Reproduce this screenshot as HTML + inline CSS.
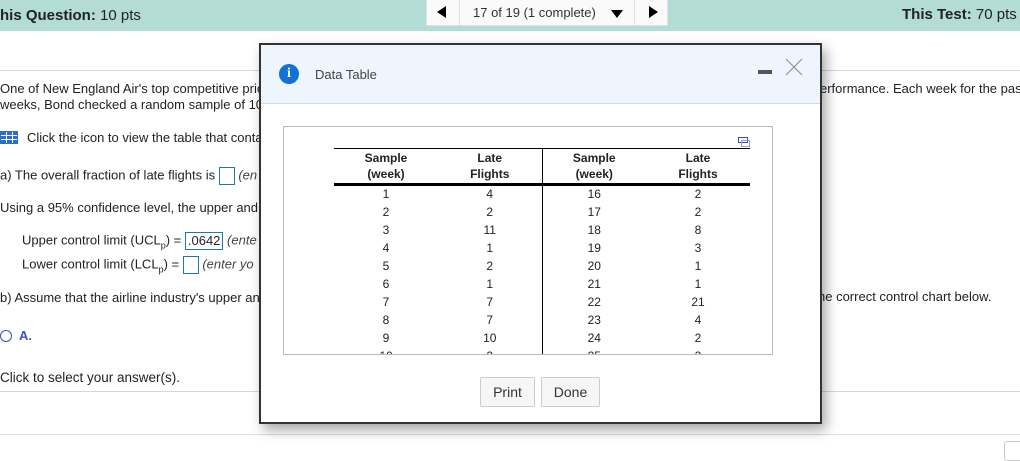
<!DOCTYPE html>
<html><head><meta charset="utf-8">
<style>
*{margin:0;padding:0;box-sizing:border-box}
body{width:1020px;height:457px;overflow:hidden;background:#fff;font-family:"Liberation Sans",Arial,sans-serif;color:#222;position:relative;font-size:13px}
.abs{position:absolute;white-space:nowrap}
.top{position:absolute;left:0;top:0;width:1020px;height:31px;background:#b3dcd6}
.nav{position:absolute;left:426px;top:0;width:242px;height:26px;background:#fafafa;border:1px solid #e0e0e0;border-top:none}
.hl{position:absolute;left:0;width:1020px;height:1px;background:#d3d8e0}
.box{display:inline-block;border:1px solid #1a7aa8;height:18px;vertical-align:middle}
sub{font-size:9px;vertical-align:-4px}
.dlg{position:absolute;left:259px;top:43px;width:563px;height:381px;border:2px solid #333;background:#fff;box-shadow:4px 6px 12px rgba(0,0,0,.35)}
.dh{position:absolute;left:0;top:0;width:559px;height:59px;background:#eff5fc;border-bottom:1px solid #c9dcec}
.inner{position:absolute;left:22px;top:81px;width:490px;height:229px;border:1px solid #bbb;overflow:hidden;background:#fff}
table{position:absolute;left:50px;top:21px;border-collapse:collapse;font-size:12px}
td,th{width:104px;text-align:center;height:18px;padding:0}
th{font-weight:bold;line-height:16px;height:36px;border-top:1px solid #000;border-bottom:3px solid #000;vertical-align:middle}
.d{border-right:1px solid #000}
.btn{position:absolute;top:332px;height:30px;border:1px solid #ccc;border-radius:2px;background:#f6f6f6;font-size:14px;color:#333;text-align:center;line-height:28px}
</style></head><body>
<div class="top"></div>
<div class="abs" style="left:0;top:7px;font-size:15px"><b>his Question:</b> 10 pts</div>
<div class="nav">
 <div style="position:absolute;left:32px;top:0;width:1px;height:26px;background:#e0e0e0"></div>
 <div style="position:absolute;left:207px;top:0;width:1px;height:26px;background:#e0e0e0"></div>
 <div class="abs" style="left:10px;top:6px;width:0;height:0;border-top:6px solid transparent;border-bottom:6px solid transparent;border-right:9px solid #000"></div>
 <div class="abs" style="left:46px;top:5px;font-size:13px;color:#333">17 of 19 (1 complete)</div>
 <div class="abs" style="left:184px;top:10px;width:0;height:0;border-left:6px solid transparent;border-right:6px solid transparent;border-top:8px solid #000"></div>
 <div class="abs" style="left:222px;top:6px;width:0;height:0;border-top:6px solid transparent;border-bottom:6px solid transparent;border-left:9px solid #000"></div>
</div>
<div class="abs" style="left:902px;top:6px;font-size:15px"><b>This Test:</b> 70 pts</div>
<div class="hl" style="top:70px"></div>
<div class="abs" style="left:0;top:81px">One of New England Air's top competitive pric</div>
<div class="abs" style="left:0;top:97px">weeks, Bond checked a random sample of 10</div>
<div class="abs" style="left:820px;top:81px">erformance. Each week for the pas</div>
<div class="abs" style="left:0;top:131px;width:18px;height:13px;background:#2a6fc9;border:1px solid #2a6fc9;background-image:linear-gradient(90deg,transparent 5px,#fff 5px,#fff 6px,transparent 6px,transparent 11px,#fff 11px,#fff 12px,transparent 12px),linear-gradient(transparent 3px,#fff 3px,#fff 4px,transparent 4px,transparent 7px,#fff 7px,#fff 8px,transparent 8px)"></div>
<div class="abs" style="left:27px;top:130px">Click the icon to view the table that conta</div>
<div class="abs" style="left:0;top:167px">a) The overall fraction of late flights is <span class="box" style="width:16px"></span> <i style="color:#444">(en</i></div>
<div class="abs" style="left:0;top:200px">Using a 95% confidence level, the upper and</div>
<div class="abs" style="left:22px;top:232px">Upper control limit (UCL<sub>p</sub>) = <span class="box" style="padding:0 2px;line-height:16px">.0642</span> <i style="color:#444">(ente</i></div>
<div class="abs" style="left:22px;top:256px">Lower control limit (LCL<sub>p</sub>) = <span class="box" style="width:16px"></span> <i style="color:#444">(enter yo</i></div>
<div class="abs" style="left:0;top:290px">b) Assume that the airline industry's upper an</div>
<div class="abs" style="left:818px;top:289px">he correct control chart below.</div>
<div class="abs" style="left:0;top:330px;width:12px;height:12px;border:1.5px solid #3b50c8;border-radius:50%"></div>
<div class="abs" style="left:19px;top:328px;color:#3b50c8;font-weight:bold">A.</div>
<div class="abs" style="left:0;top:370px;font-size:13.5px">Click to select your answer(s).</div>
<div class="hl" style="top:391px"></div>
<div class="hl" style="top:434px;background:#ddd"></div>
<div class="abs" style="left:1004px;top:441px;width:20px;height:20px;border:1px solid #ccc;border-radius:3px"></div>
<div class="dlg">
 <div class="dh">
  <div class="abs" style="left:18px;top:19px;width:20px;height:20px;border-radius:50%;background:#1172d2;color:#fff;font-weight:bold;font-size:14px;text-align:center;line-height:20px;font-family:'Liberation Serif',serif">i</div>
  <div class="abs" style="left:54px;top:22px;font-size:13px;color:#444">Data Table</div>
  <div class="abs" style="left:497px;top:25px;width:14px;height:4px;background:#555"></div>
  <svg class="abs" style="left:524px;top:13px" width="18" height="18"><path d="M1 1L17 17M17 1L1 17" stroke="#888" stroke-width="1"/></svg>
 </div>
 <div class="inner">
  <svg class="abs" style="left:454px;top:10px" width="12" height="10"><rect x="0.5" y="0.5" width="9" height="5" fill="none" stroke="#4a4ab0"/><rect x="3.5" y="3.5" width="8" height="6" fill="none" stroke="#99c"/></svg>
  <table>
   <tr><th>Sample<br>(week)</th><th class="d">Late<br>Flights</th><th>Sample<br>(week)</th><th>Late<br>Flights</th></tr>
   <tr><td>1</td><td class="d">4</td><td>16</td><td>2</td></tr>
   <tr><td>2</td><td class="d">2</td><td>17</td><td>2</td></tr>
   <tr><td>3</td><td class="d">11</td><td>18</td><td>8</td></tr>
   <tr><td>4</td><td class="d">1</td><td>19</td><td>3</td></tr>
   <tr><td>5</td><td class="d">2</td><td>20</td><td>1</td></tr>
   <tr><td>6</td><td class="d">1</td><td>21</td><td>1</td></tr>
   <tr><td>7</td><td class="d">7</td><td>22</td><td>21</td></tr>
   <tr><td>8</td><td class="d">7</td><td>23</td><td>4</td></tr>
   <tr><td>9</td><td class="d">10</td><td>24</td><td>2</td></tr>
   <tr><td>10</td><td class="d">2</td><td>25</td><td>2</td></tr>
  </table>
 </div>
 <div class="btn" style="left:219px;width:55px">Print</div>
 <div class="btn" style="left:280px;width:59px">Done</div>
</div>
</body></html>
